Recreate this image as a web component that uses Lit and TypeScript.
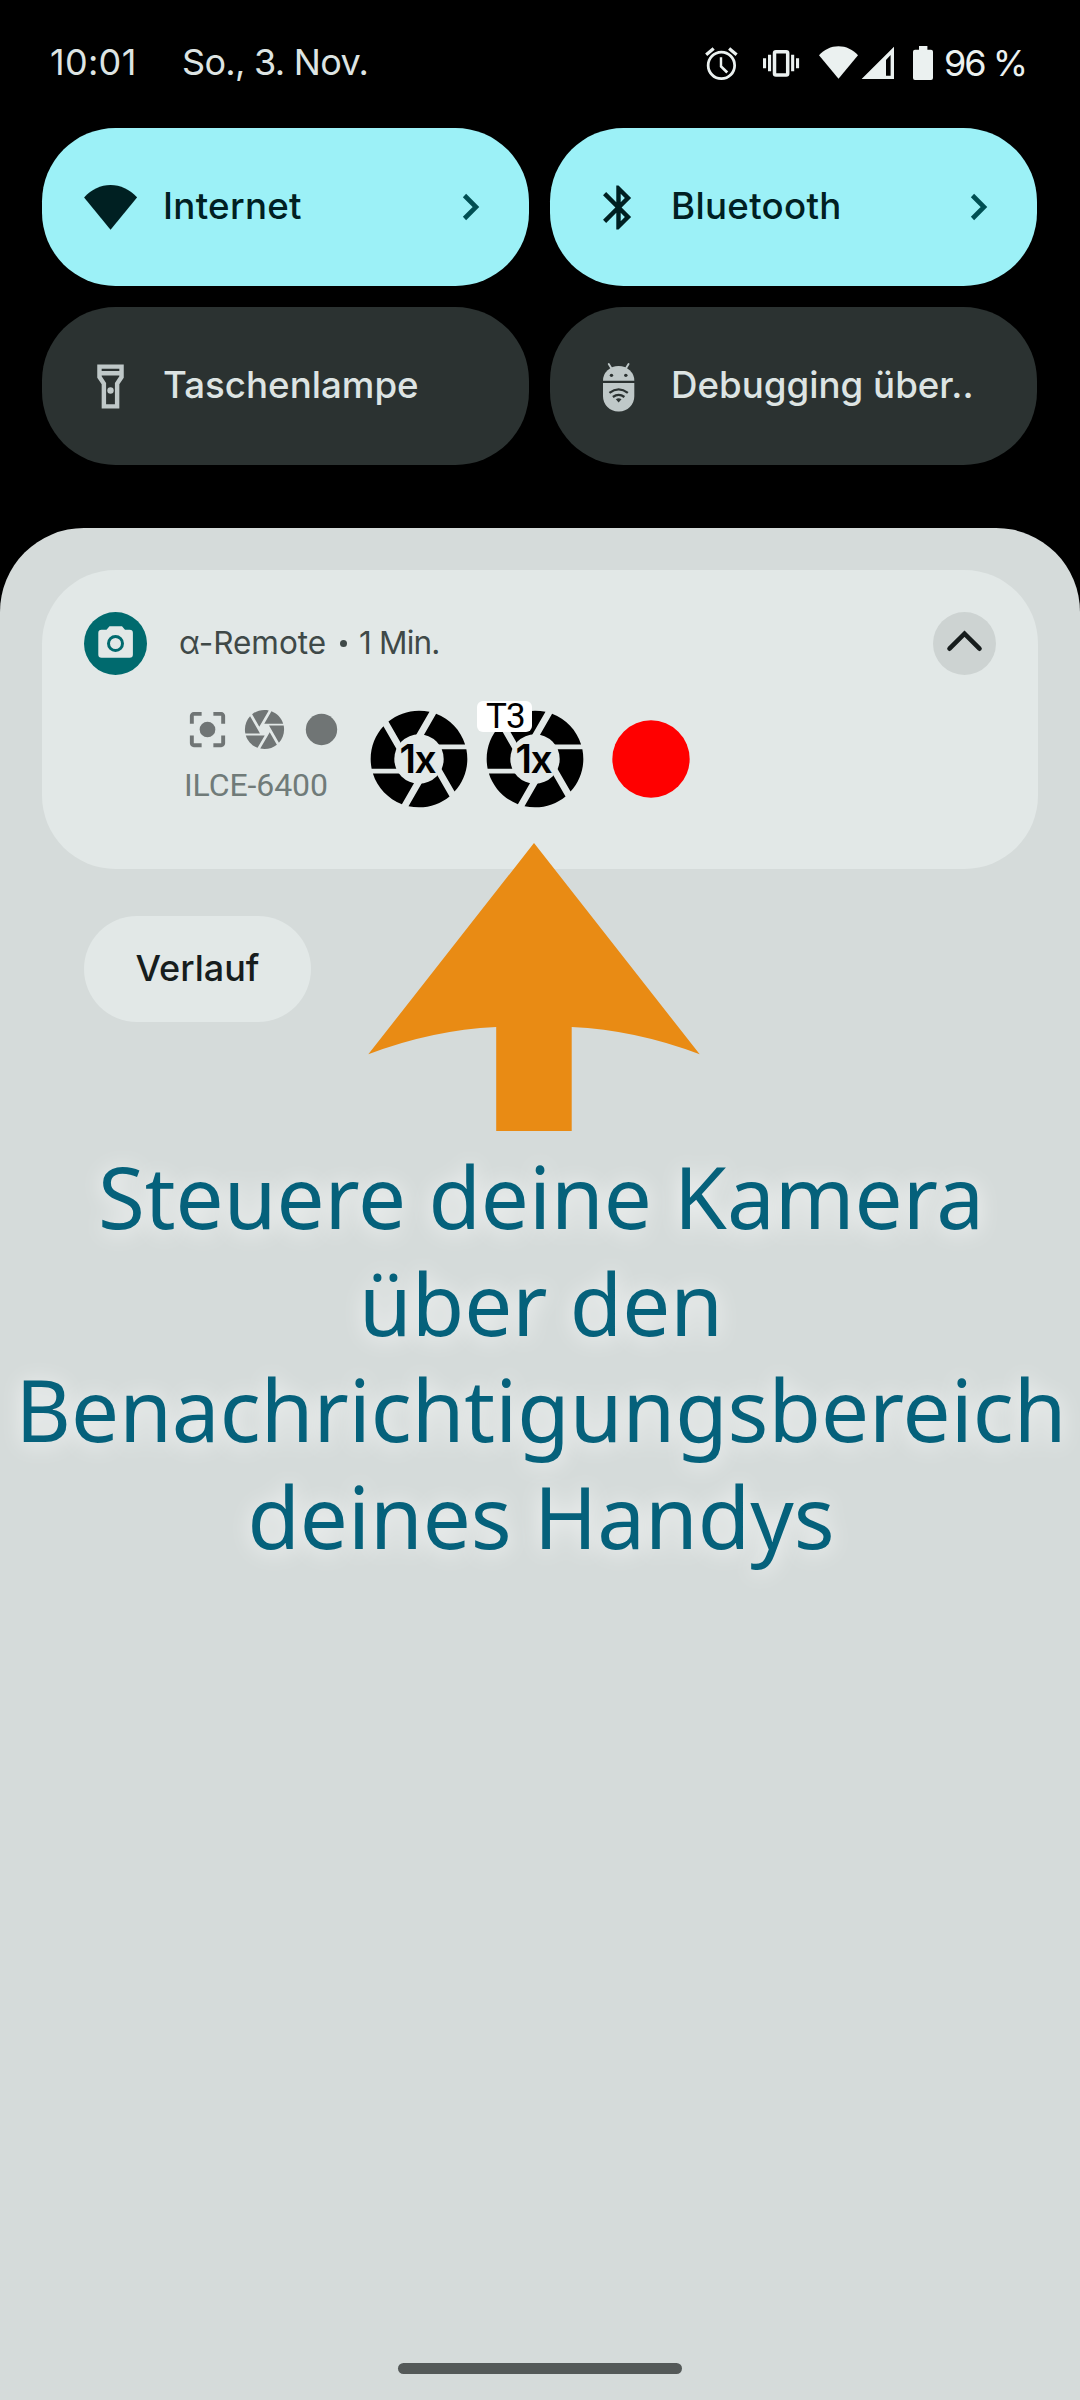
import { LitElement, html, css, svg } from "lit";
import { customElement, property } from "lit/decorators.js";

const APERTURE =
  "M9.4 10.5l4.77-8.26C13.47 2.09 12.75 2 12 2c-2.4 0-4.6.85-6.32 2.25l3.66 6.35.06-.1zM21.54 9c-.92-2.92-3.15-5.26-6-6.34L11.88 9h9.66zm.26 1h-7.49l.29.5 4.76 8.25C21 16.97 22 14.61 22 12c0-.69-.07-1.35-.2-2zM8.54 12l-3.9-6.75C3.01 7.03 2 9.39 2 12c0 .69.07 1.35.2 2h7.49l-1.15-2zm-6.08 3c.92 2.92 3.15 5.26 6 6.34L12.12 15H2.46zm11.27 0l-3.9 6.76c.7.15 1.42.24 2.17.24 2.4 0 4.6-.85 6.32-2.25l-3.66-6.35-.93 1.6z";

const tileIcons: Record<string, unknown> = {
  wifi: svg`<path d="M0.1 16.3C7.5 8.4 16.5 4 26.3 4S45.300 8.400 52.600 16.300L26.300 48.400z"/>`,
  bluetooth: svg`<path transform="scale(2.1875)" d="M17.71 7.71L12 2h-1v7.59L6.41 5 5 6.41 10.59 12 5 17.59 6.41 19 11 14.41V22h1l5.71-5.71-4.3-4.29 4.3-4.29zM13 5.83l1.88 1.88L13 9.59V5.83zm1.880 10.460L13 18.170v-3.760l1.880 1.880z"/>`,
  torch: svg`<g transform="scale(2.1875)"><path fill-rule="evenodd" d="M18 2H6v6l2 3v11h8V11l2-3V2zM16 4v1H8V4zM14 10.400V20h-4v-9.610l-2-3V7h8v.390z"/><circle cx="12" cy="13.800" r="1.450"/></g>`,
  android: svg`<path d="M10.900 20.500a15.500 14.500 0 0 1 31 0z"/><path d="M10.900 22.800h31V36a15 15 0 0 1-15 15h-1a15 15 0 0 1-15-15z"/>
    <path d="M16.600 4l3 5M36.200 4l-3 5" fill="none" stroke="currentColor" stroke-width="1.900" stroke-linecap="round"/>
    <g fill="#2b3231"><circle cx="19.300" cy="15.200" r="1.700"/><circle cx="33.500" cy="15.200" r="1.700"/></g>
    <g fill="none" stroke="#2b3231" stroke-width="2.300"><path d="M17.300 32.500q9.100-6.800 18.200 0"/><path d="M20.700 36.700q5.700-4.200 11.400 0"/></g>
    <path fill="#2b3231" d="M23.600 38.800q2.800-1.800 5.600 0l-2.800 3.400z"/>`,
};

@customElement("qs-tile")
export class QsTile extends LitElement {
  @property() icon = "wifi";
  @property() label = "";
  @property({ type: Boolean, reflect: true }) active = false;
  @property({ type: Boolean }) expandable = false;

  static styles = css`
    :host {
      display: flex;
      align-items: center;
      box-sizing: border-box;
      height: 158px;
      padding: 0 42px;
      border-radius: 73.5px;
      background: #2b3231;
      color: #dde4e3;
      font: 500 36.7px/48px Inter, Roboto, sans-serif;
    }
    :host([active]) { background: #9cf1f7; color: #002022; letter-spacing: 0.3px; }
    .icon { width: 53px; height: 53px; flex: none; color: #bfc8c8; fill: currentColor; }
    :host([active]) .icon { color: inherit; }
    .label { flex: 1; margin-left: 26px; padding-bottom: 2px; white-space: nowrap; }
    .chevron { flex: none; width: 30px; height: 40px; fill: none; stroke: #004f53; stroke-width: 4.6; }
  `;

  render() {
    return html`
      <svg class="icon" viewBox="0 0 52.5 52.5">${tileIcons[this.icon]}</svg>
      <span class="label">${this.label}</span>
      ${this.expandable
        ? html`<svg class="chevron" viewBox="0 0 30 40"><path d="M7.500 8.500L19 20L7.500 31.500" /></svg>`
        : null}
    `;
  }
}

@customElement("status-bar")
export class StatusBar extends LitElement {
  static styles = css`
    :host {
      display: flex;
      align-items: center;
      box-sizing: border-box;
      height: 128px;
      padding: 0 54px 3px 50px;
      color: #dde4e3;
      font: 400 36px/44px Inter, Roboto, sans-serif;
    }
    .time { width: 132px; padding-bottom: 2px; letter-spacing: 0.3px; }
    .date { flex: 1; padding-bottom: 2px; letter-spacing: -0.7px; }
    .icons { flex: none; width: 240px; height: 40px; fill: #ebf1f0; }
    .battery { flex: none; color: #ebf1f0; white-space: nowrap; width: 82px; margin-left: 4px; letter-spacing: -2px; }
  `;

  render() {
    return html`
      <span class="time">10:01</span>
      <span class="date">So., 3. Nov.</span>
      <svg class="icons" viewBox="700 43 240 40">
        <path transform="translate(701.900 44.300) scale(1.625)" d="M22 5.720l-4.600-3.860-1.290 1.530 4.600 3.860L22 5.720zM7.880 3.390L6.600 1.860 2 5.710l1.290 1.530 4.590-3.850zM12.500 8H11v6l4 4 1.200-1.200-3.700-3.600V8zM12 4c-4.970 0-9 4.030-9 9s4.020 9 9 9a9 9 0 0 0 0-18zm0 16.300c-4 0-7.300-3.300-7.300-7.300S8 5.700 12 5.700s7.300 3.300 7.300 7.300-3.300 7.300-7.300 7.300z"/>
        <rect x="774.500" y="51.700" width="13.200" height="23.400" rx="1.500" fill="none" stroke="#ebf1f0" stroke-width="3.500"/>
        <path d="M768 54.700h3.100v16.600H768zM763 58.200h3.100v10H763zM791.100 54.700h3.100v16.600h-3.100zM796 58.200h3.100v10H796z"/>
        <path d="M819 55.300C824 49.500 831 46.200 838.500 46.200S853 49.500 858 55.300L838.500 78.700z"/>
        <path fill-rule="evenodd" d="M894 46.700V79h-32.400zM890.600 55v20.700H886V60z"/>
        <path d="M919 46h8.400v3.700h3.600q2 0 2 2V78q0 2-2 2h-16q-2 0-2-2V51.700q0-2 2-2h4z"/>
      </svg>
      <span class="battery">96 %</span>
    `;
  }
}

@customElement("camera-notification")
export class CameraNotification extends LitElement {
  static styles = css`
    :host {
      display: flex;
      flex-direction: column;
      box-sizing: border-box;
      height: 299px;
      padding: 42px;
      border-radius: 73.5px;
      background: #e2e8e7;
    }
    .header { display: flex; align-items: center; height: 63px; color: #3f4948; font: 400 31.500px/40px Inter, Roboto, sans-serif; }
    .app-icon, .collapse { width: 63px; height: 63px; flex: none; }
    .title { margin-left: 32px; padding-bottom: 1px; flex: 1; display: flex; align-items: center; white-space: nowrap; }
    .name { width: 149px; }
    .dot { width: 7px; height: 7px; border-radius: 50%; background: currentColor; margin: 1px 12px 0 12px; }
    .age { letter-spacing: -0.8px; }
    .body { display: flex; margin-left: 98px; }
    .camera { width: 179px; padding-top: 31px; }
    .state { display: flex; gap: 10px; margin-left: 2px; }
    .state svg { width: 47px; height: 47px; fill: #707575; }
    .model { margin: 12px 0 0 2px; color: #707b79; font: 400 32px/40px Roboto, sans-serif; letter-spacing: -0.1px; white-space: nowrap; }
    .actions { display: flex; padding-top: 26px; }
    .action { position: relative; width: 116px; height: 116px; }
    .action svg { display: block; width: 116px; height: 116px; }
    .glyph { font: 600 39px Inter, Roboto, sans-serif; }
    .badge {
      position: absolute;
      left: 0;
      top: 0;
      box-sizing: border-box;
      width: 55px;
      height: 31px;
      padding-left: 9px;
      border-radius: 6px;
      background: #fff;
      color: #000;
      font: 400 35px/31px Roboto, sans-serif;
      letter-spacing: -1px;
      white-space: nowrap;
    }
  `;

  private aperture() {
    return html`<svg viewBox="0 0 116 116">
      <path transform="scale(4.833)" d=${APERTURE} />
      <circle cx="58" cy="58" r="24.700" fill="#e2e8e7" />
      <text class="glyph" x="38.500 53.500" y="72.300">1x</text>
    </svg>`;
  }

  render() {
    return html`
      <div class="header">
        <svg class="app-icon" viewBox="0 0 63 63">
          <circle cx="31.500" cy="31.500" r="31.500" fill="#006a6e" />
          <path fill="#e2e8e7" d="M25.500 14.300h12.500l3 3.400h4.600q3.300 0 3.300 3.300v21.400q0 3.300-3.300 3.300h-28q-3.300 0-3.300-3.300V21q0-3.300 3.300-3.300h4.900z" />
          <circle cx="31.500" cy="31.500" r="7" fill="none" stroke="#006a6e" stroke-width="3" />
        </svg>
        <div class="title">
          <span class="name">α-Remote</span><span class="dot"></span><span class="age">1 Min.</span>
        </div>
        <svg class="collapse" viewBox="0 0 63 63">
          <circle cx="31.500" cy="31.500" r="31.500" fill="#cdd3d2" />
          <path d="M16.500 36.700L31.500 21.700L46.500 36.700" fill="none" stroke="#171d1d" stroke-width="4.600" stroke-linecap="round" />
        </svg>
      </div>
      <div class="body">
        <div class="camera">
          <div class="state">
            <svg viewBox="0 0 24 24"><path d="M5 15H3v4c0 1.100.9 2 2 2h4v-2H5v-4zM5 5h4V3H5c-1.100 0-2 .9-2 2v4h2V5zm14-2h-4v2h4v4h2V5c0-1.100-.9-2-2-2zm0 16h-4v2h4c1.100 0 2-.9 2-2v-4h-2v4z"/><circle cx="12" cy="12" r="4"/></svg>
            <svg viewBox="0 0 24 24"><path d=${APERTURE} /></svg>
            <svg viewBox="0 0 24 24"><circle cx="12" cy="12" r="8" /></svg>
          </div>
          <div class="model">ILCE-6400</div>
        </div>
        <div class="actions">
          <div class="action">${this.aperture()}</div>
          <div class="action">${this.aperture()}<span class="badge">T3</span></div>
          <div class="action"><svg viewBox="0 0 24 24"><circle cx="12" cy="12" r="8" fill="#f00" /></svg></div>
        </div>
      </div>
    `;
  }
}

@customElement("app-root")
export class AppRoot extends LitElement {
  static styles = css`
    :host { display: block; }
    .screen { display: flex; flex-direction: column; width: 1080px; height: 2400px; background: #000; overflow: hidden; }
    .tiles { display: grid; grid-template-columns: 487px 487px; gap: 21px; padding: 0 42px; }
    .shade {
      position: relative;
      display: flex;
      flex-direction: column;
      flex: 1;
      box-sizing: border-box;
      margin-top: 63px;
      padding: 42px 42px 26px;
      border-radius: 84px 84px 0 0;
      background: #d5dbda;
    }
    .history {
      display: flex;
      align-items: center;
      justify-content: center;
      box-sizing: border-box;
      width: 227px;
      height: 106px;
      margin: 47px 0 0 42px;
      padding-bottom: 2px;
      border-radius: 53px;
      background: #e2e8e7;
      color: #171d1d;
      font: 500 36px/44px Inter, Roboto, sans-serif;
    }
    .arrow { position: absolute; left: 368px; top: 315px; width: 332px; height: 288px; fill: #e98b14; }
    .headline {
      margin: 121px -42px 0;
      padding-left: 2px;
      text-align: center;
      color: #05617b;
      font: 400 85.330px/106.670px "Noto Sans", "Open Sans", sans-serif;
      text-shadow: 0 2px 22px rgba(255, 255, 255, 0.900);
    }
    .home { width: 284px; height: 11px; margin: auto auto 0; border-radius: 5.500px; background: #545958; }
  `;

  render() {
    return html`
      <div class="screen">
        <status-bar></status-bar>
        <div class="tiles">
          <qs-tile icon="wifi" label="Internet" active expandable></qs-tile>
          <qs-tile icon="bluetooth" label="Bluetooth" active expandable></qs-tile>
          <qs-tile icon="torch" label="Taschenlampe"></qs-tile>
          <qs-tile icon="android" label="Debugging über.."></qs-tile>
        </div>
        <div class="shade">
          <camera-notification></camera-notification>
          <div class="history">Verlauf</div>
          <div class="headline">Steuere deine Kamera<br />über den<br />Benachrichtigungsbereich<br />deines Handys</div>
          <div class="home"></div>
          <svg class="arrow" viewBox="0 0 332 288">
            <path d="M166 0L331.700 211.300Q268 187 203.700 184V288H128.200V184Q64 187 .3 211.300z" />
          </svg>
        </div>
      </div>
    `;
  }
}
